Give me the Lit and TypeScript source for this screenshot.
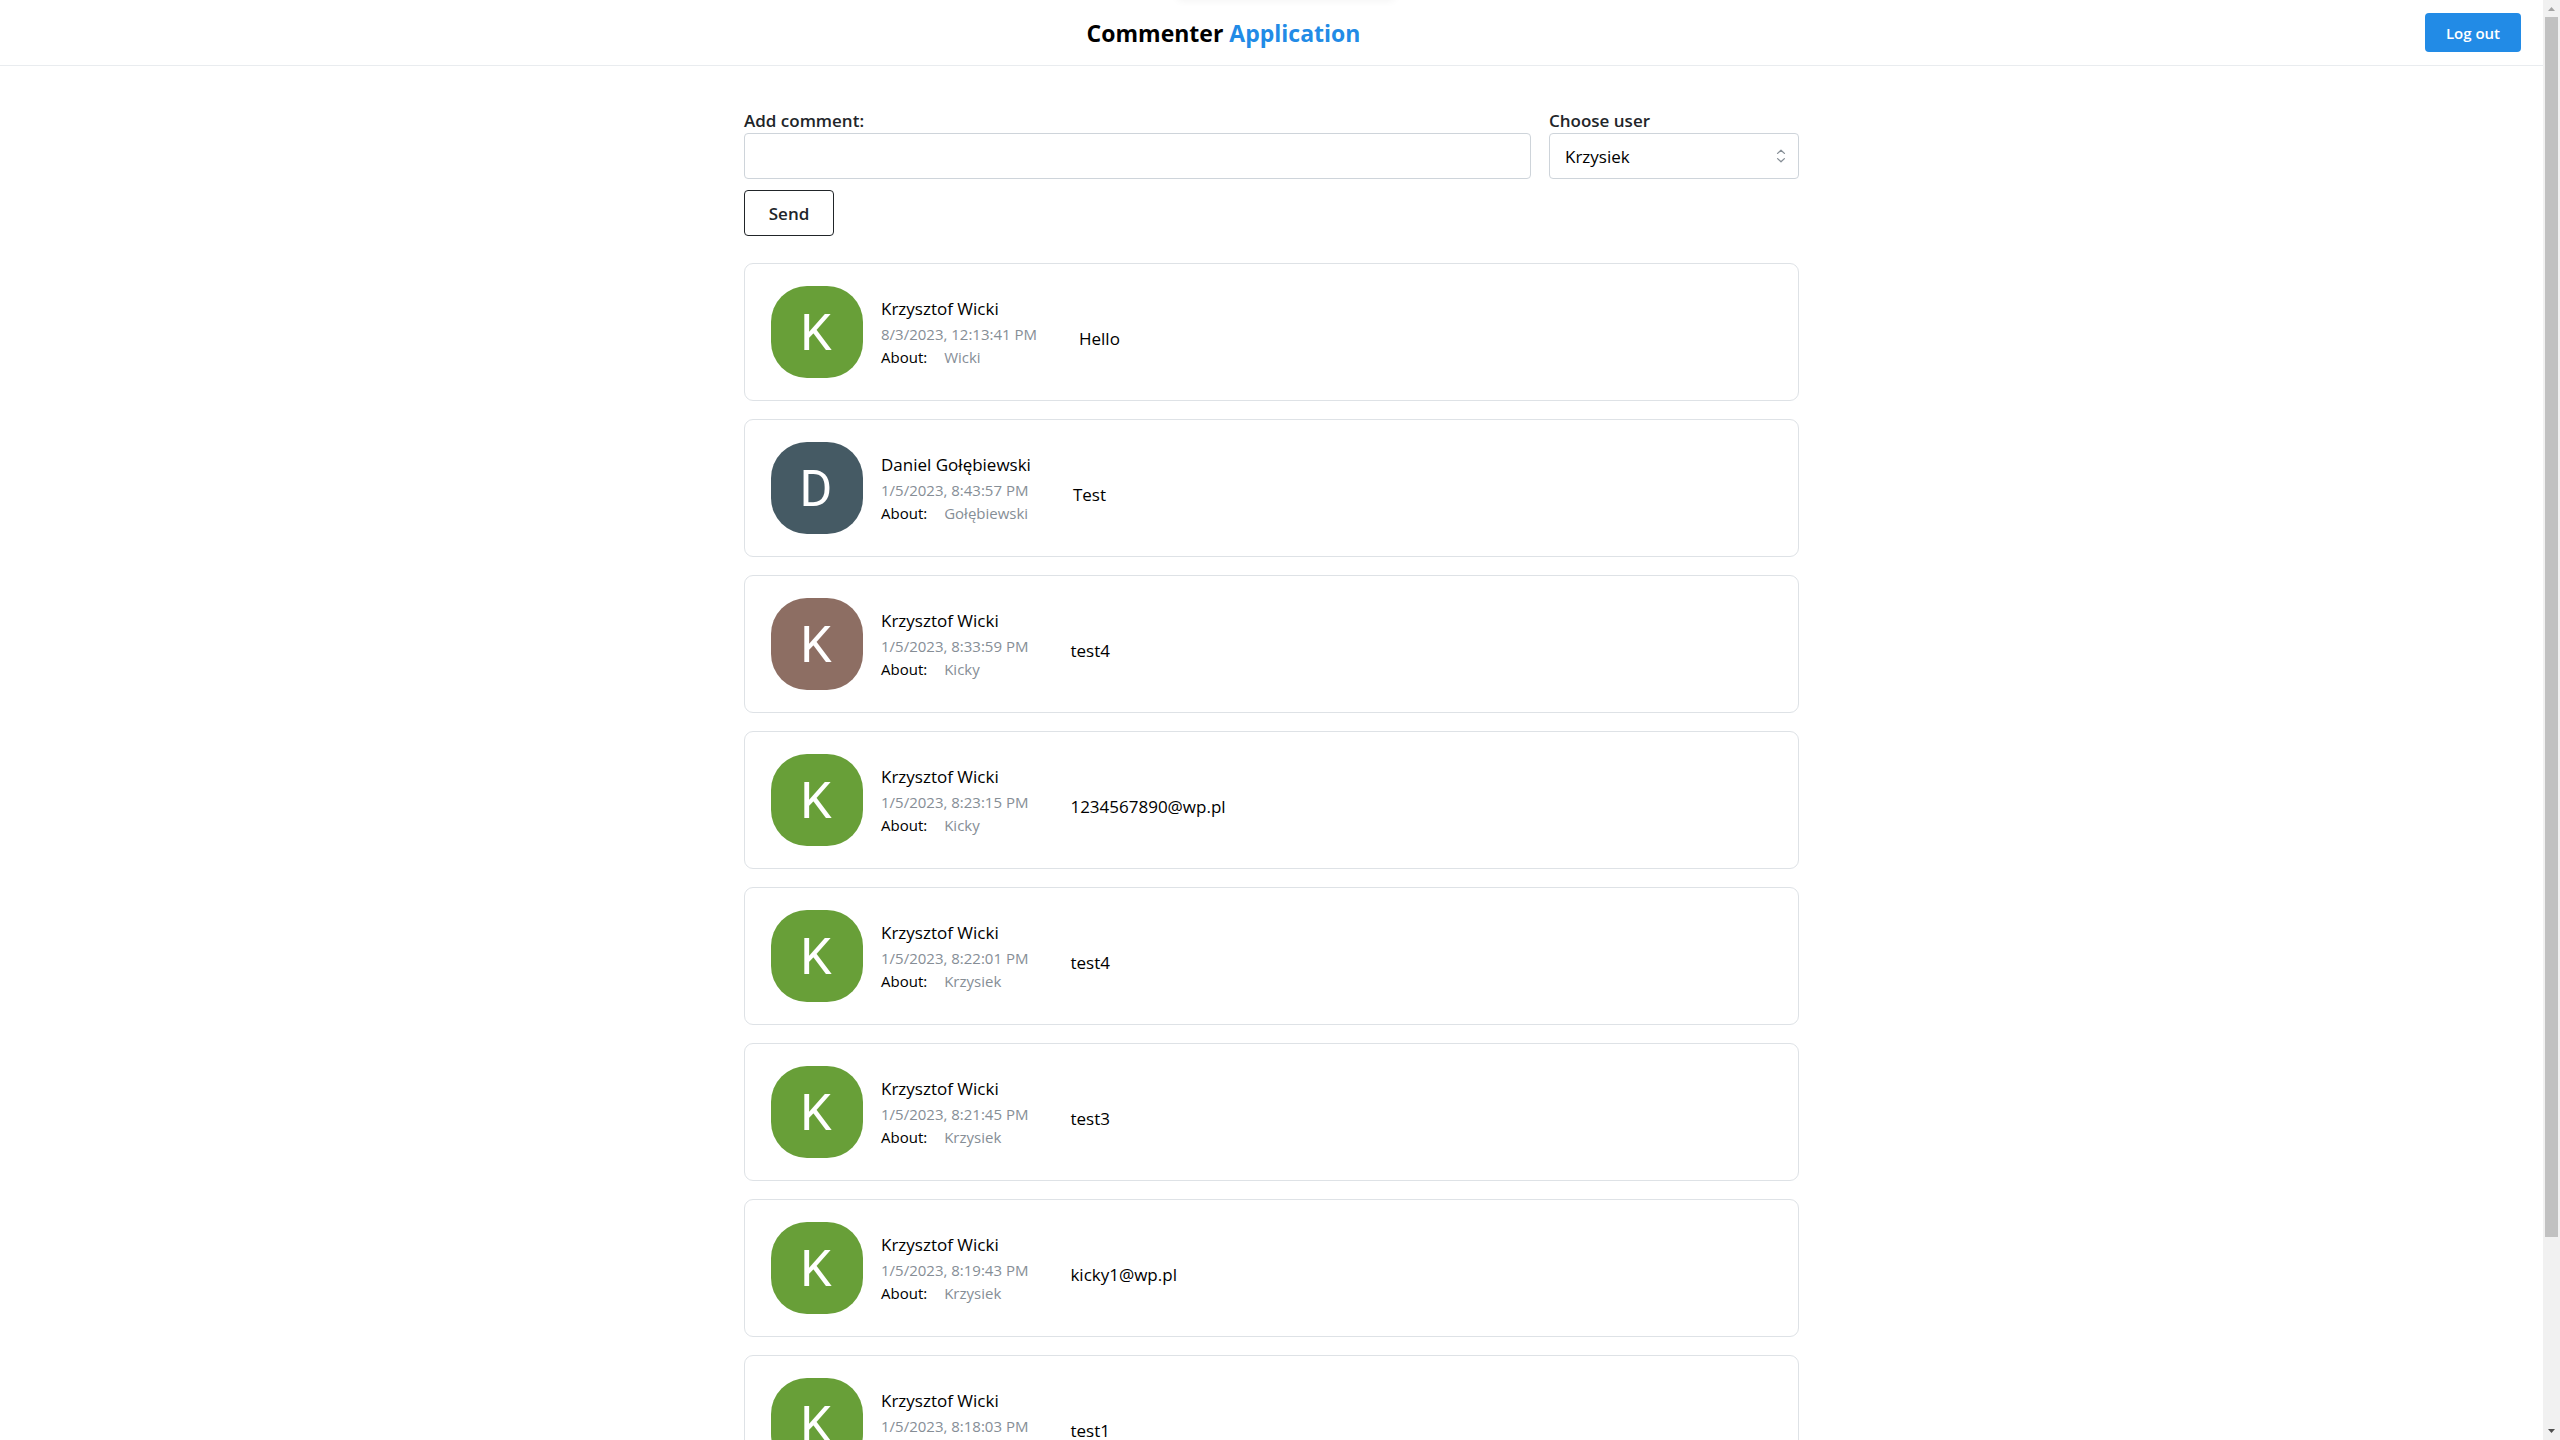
import { LitElement, html, css } from "lit";
import { customElement, property, state } from "lit/decorators.js";

interface Comment {
  author: string;
  date: string;
  about: string;
  text: string;
  tone: "green" | "slate" | "brown";
}

const USERS = ["Krzysiek", "Kicky", "Wicki", "Gołębiewski"];

const COMMENTS: Comment[] = [
  { author: "Krzysztof Wicki", date: "8/3/2023, 12:13:41 PM", about: "Wicki", text: "Hello", tone: "green" },
  { author: "Daniel Gołębiewski", date: "1/5/2023, 8:43:57 PM", about: "Gołębiewski", text: "Test", tone: "slate" },
  { author: "Krzysztof Wicki", date: "1/5/2023, 8:33:59 PM", about: "Kicky", text: "test4", tone: "brown" },
  { author: "Krzysztof Wicki", date: "1/5/2023, 8:23:15 PM", about: "Kicky", text: "1234567890@wp.pl", tone: "green" },
  { author: "Krzysztof Wicki", date: "1/5/2023, 8:22:01 PM", about: "Krzysiek", text: "test4", tone: "green" },
  { author: "Krzysztof Wicki", date: "1/5/2023, 8:21:45 PM", about: "Krzysiek", text: "test3", tone: "green" },
  { author: "Krzysztof Wicki", date: "1/5/2023, 8:19:43 PM", about: "Krzysiek", text: "kicky1@wp.pl", tone: "green" },
  { author: "Krzysztof Wicki", date: "1/5/2023, 8:18:03 PM", about: "Krzysiek", text: "test1", tone: "green" },
];

@customElement("comment-card")
export class CommentCard extends LitElement {
  @property({ attribute: false }) comment!: Comment;

  static styles = css`
    :host {
      display: block;
    }
    .card {
      display: flex;
      align-items: center;
      box-sizing: border-box;
      padding: 22px 26px;
      border: 1px solid #dee2e6;
      border-radius: 9px;
      background: #fff;
    }
    .avatar {
      display: flex;
      flex: none;
      align-items: center;
      justify-content: center;
      box-sizing: border-box;
      width: 92px;
      height: 92px;
      padding: 2px 2px 0 0;
      border-radius: 36px;
      color: #fff;
      font: 400 50px/60px Roboto, sans-serif;
    }
    .green {
      background: #689f38;
    }
    .slate {
      background: #455a64;
    }
    .brown {
      background: #8d6e63;
    }
    .info {
      margin-left: 18px;
    }
    .name,
    .date,
    .about,
    .text {
      margin: 0;
      white-space: nowrap;
    }
    .name,
    .text {
      font-size: 17px;
      line-height: 28px;
    }
    .date,
    .about {
      font-size: 15px;
      line-height: 23px;
    }
    .date,
    .topic {
      color: #868e96;
    }
    .about {
      display: flex;
      gap: 17px;
    }
    .text {
      margin-left: 42px;
      padding-top: 14px;
    }
  `;

  render() {
    const c = this.comment;
    return html`
      <article class="card">
        <div class="avatar ${c.tone}" aria-hidden="true">${c.author[0]}</div>
        <div class="info">
          <p class="name">${c.author}</p>
          <p class="date">${c.date}</p>
          <p class="about"><span>About:</span><span class="topic">${c.about}</span></p>
        </div>
        <p class="text">${c.text}</p>
      </article>
    `;
  }
}

@customElement("app-root")
export class AppRoot extends LitElement {
  @state() private draft = "";

  static styles = css`
    :host {
      display: grid;
      grid-template-columns: minmax(0, 1fr) 17px;
      height: 100vh;
      overflow: hidden;
      position: relative;
      background: #fff;
      color: #000;
      font-family: "Segoe UI", "Open Sans", "Noto Sans", sans-serif;
      font-size: 17px;
      line-height: 28px;
    }
    .page {
      overflow: hidden;
    }
    .hint {
      position: absolute;
      top: -10px;
      left: 46%;
      width: 216px;
      height: 10px;
      box-shadow: 0 0 8px rgba(0, 0, 0, 0.06);
    }
    .header {
      display: flex;
      align-items: center;
      height: 65px;
      padding: 0 22px;
      border-bottom: 1px solid #e9ecef;
    }
    .title {
      flex: 1;
      margin: 0;
      font-size: 23px;
      font-weight: 700;
      line-height: 36px;
      text-align: center;
    }
    .accent {
      color: #228be6;
    }
    .button {
      box-sizing: border-box;
      border-radius: 4px;
      font-family: inherit;
      font-weight: 600;
      cursor: pointer;
    }
    .logout {
      width: 96px;
      height: 39px;
      padding: 0;
      border: 0;
      background: #228be6;
      color: #fff;
      font-size: 15px;
    }
    .content {
      box-sizing: border-box;
      max-width: 1055px;
      margin: 0 auto;
      padding-top: 43px;
    }
    .form {
      display: grid;
      grid-template-columns: minmax(0, 1fr) 250px;
      column-gap: 18px;
    }
    .field {
      display: flex;
      flex-direction: column;
    }
    .label {
      color: #212529;
      font-weight: 600;
      line-height: 24px;
    }
    .control {
      box-sizing: border-box;
      width: 100%;
      height: 46px;
      padding: 1px 15px 0;
      border: 1px solid #ced4da;
      border-radius: 4px;
      background: #fff;
      color: #000;
      font: inherit;
    }
    .select-box {
      display: grid;
      align-items: center;
    }
    .select-box > * {
      grid-area: 1 / 1;
    }
    .select {
      appearance: none;
    }
    .caret {
      justify-self: end;
      width: 16px;
      height: 16px;
      margin-right: 10px;
      pointer-events: none;
    }
    .send {
      width: 90px;
      height: 46px;
      margin-top: 11px;
      padding: 0;
      border: 1px solid #212529;
      background: #fff;
      color: #212529;
      font-size: 17px;
    }
    .list {
      display: grid;
      gap: 18px;
      margin: 27px 0 0;
      padding: 0;
      list-style: none;
    }
    .scrollbar {
      display: flex;
      flex-direction: column;
      background: #f1f1f1;
    }
    .arrow {
      display: block;
      flex: none;
      width: 17px;
      height: 17px;
    }
    .track {
      flex: 1;
      padding: 0 2px;
    }
    .thumb {
      height: 86.8%;
      background: #c1c1c1;
    }
  `;

  private onInput(e: Event) {
    this.draft = (e.target as HTMLInputElement).value;
  }

  private onSubmit(e: Event) {
    e.preventDefault();
    this.draft = "";
  }

  render() {
    return html`
      <div class="page">
        <header class="header">
          <h1 class="title">Commenter <span class="accent">Application</span></h1>
          <button class="button logout" type="button">Log out</button>
        </header>
        <main class="content">
          <form @submit=${this.onSubmit}>
            <div class="form">
              <div class="field">
                <label class="label" for="comment">Add comment:</label>
                <input class="control" id="comment" type="text" .value=${this.draft} @input=${this.onInput} />
              </div>
              <div class="field">
                <label class="label" for="user">Choose user</label>
                <div class="select-box">
                  <select class="control select" id="user">
                    ${USERS.map((u) => html`<option>${u}</option>`)}
                  </select>
                  <svg class="caret" viewBox="0 0 16 16" fill="none" stroke="#868e96" stroke-width="1.3"
                    stroke-linecap="round" stroke-linejoin="round" aria-hidden="true">
                    <path d="M4.6 5.4 8 2.2l3.4 3.2M4.6 10.6 8 13.8l3.4-3.2" />
                  </svg>
                </div>
              </div>
            </div>
            <button class="button send" type="submit">Send</button>
          </form>
          <ul class="list">
            ${COMMENTS.map((c) => html`<li><comment-card .comment=${c}></comment-card></li>`)}
          </ul>
        </main>
      </div>
      <div class="scrollbar" aria-hidden="true">
        <svg class="arrow" viewBox="0 0 17 17" fill="#a3a3a3"><path d="M5 11h7L8.5 7z" /></svg>
        <div class="track"><div class="thumb"></div></div>
        <svg class="arrow" viewBox="0 0 17 17" fill="#505050"><path d="M5 6h7L8.5 10z" /></svg>
      </div>
      <div class="hint" aria-hidden="true"></div>
    `;
  }
}
